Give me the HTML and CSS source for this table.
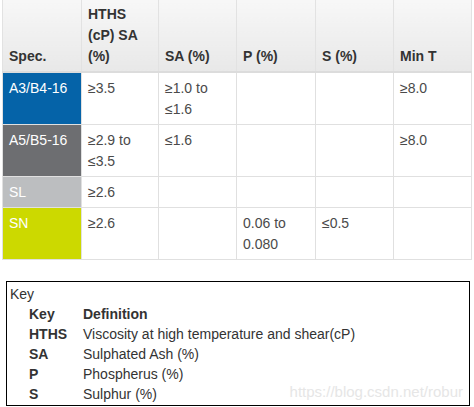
FILE: index.html
```html
<!DOCTYPE html>
<html>
<head>
<meta charset="utf-8">
<link rel="stylesheet" href="styles.css">
</head>
<body>
<table class="spec">
  <colgroup>
    <col class="c1"><col class="c2"><col class="c3"><col class="c4"><col class="c5"><col class="c6">
  </colgroup>
  <thead>
    <tr>
      <th>Spec.</th>
      <th>HTHS<br>(cP) SA<br>(%)</th>
      <th>SA (%)</th>
      <th>P (%)</th>
      <th>S (%)</th>
      <th>Min T</th>
    </tr>
  </thead>
  <tbody>
    <tr>
      <td class="name blue">A3/B4-16</td>
      <td>≥3.5</td>
      <td>≥1.0 to<br>≤1.6</td>
      <td></td>
      <td></td>
      <td>≥8.0</td>
    </tr>
    <tr>
      <td class="name dark">A5/B5-16</td>
      <td>≥2.9 to<br>≤3.5</td>
      <td>≤1.6</td>
      <td></td>
      <td></td>
      <td>≥8.0</td>
    </tr>
    <tr>
      <td class="name light">SL</td>
      <td>≥2.6</td>
      <td></td>
      <td></td>
      <td></td>
      <td></td>
    </tr>
    <tr>
      <td class="name lime">SN</td>
      <td>≥2.6</td>
      <td></td>
      <td>0.06 to<br>0.080</td>
      <td>≤0.5</td>
      <td></td>
    </tr>
  </tbody>
</table>

<div class="keybox">
  <div class="keylabel">Key</div>
  <table class="keys">
    <tr><th class="kcol">Key</th><th class="dcol">Definition</th></tr>
    <tr><th class="kcol">HTHS</th><td class="dcol">Viscosity at high temperature and shear(cP)</td></tr>
    <tr><th class="kcol">SA</th><td class="dcol">Sulphated Ash (%)</td></tr>
    <tr><th class="kcol">P</th><td class="dcol">Phospherus (%)</td></tr>
    <tr><th class="kcol">S</th><td class="dcol">Sulphur (%)</td></tr>
  </table>
  <div class="watermark">https://blog.csdn.net/robur</div>
</div>
</body>
</html>
```

FILE: styles.css
```css
html, body {
  margin: 0;
  padding: 0;
  background: #fff;
}
body {
  font-family: "Liberation Sans", Arial, sans-serif;
  font-size: 14px;
  color: #444;
}
.spec {
  margin-left: 2px;
  border-collapse: collapse;
  table-layout: fixed;
  width: 470px;
}
.c1 { width: 79px; }
.c2 { width: 77px; }
.c3 { width: 78px; }
.c4 { width: 79px; }
.c5 { width: 78px; }
.c6 { width: 78px; }
.spec th {
  text-align: left;
  vertical-align: bottom;
  font-weight: bold;
  color: #333;
  line-height: 21px;
  padding: 4px 6px 4px 6px;
  border: 1px solid #e2e2e2;
  border-top: none;
  border-bottom: 2px solid #dcdcdc;
  background: linear-gradient(#f7f7f7, #e8e8e8);
}
.spec td {
  vertical-align: top;
  line-height: 21px;
  padding: 5px 6px 4px 6px;
  border: 1px solid #e0e0e0;
  color: #4a4a4a;
}
.spec td.name {
  color: #fff;
  padding-left: 6px;
}
.blue { background: #0563a8; }
.dark { background: #6d6e71; }
.light { background: #bcbec0; }
.lime { background: #ccd900; }

.keybox {
  position: relative;
  margin: 21px 0 0 6px;
  width: 462px;
  border: 1px solid #000;
  padding: 2px 0 1px 0;
  color: #333;
}
.keylabel {
  line-height: 20px;
  padding-left: 3px;
}
.keys {
  border-collapse: collapse;
  margin-left: 22px;
}
.keys th, .keys td {
  padding: 0;
  line-height: 20px;
  text-align: left;
  vertical-align: middle;
  white-space: nowrap;
}
.keys .kcol {
  width: 54px;
  font-weight: bold;
}
.keys th.dcol {
  font-weight: bold;
}
.keys td.dcol {
  font-weight: normal;
}
.watermark {
  position: absolute;
  right: 6px;
  bottom: 5px;
  font-size: 15px;
  color: #e6e6e6;
}
```
